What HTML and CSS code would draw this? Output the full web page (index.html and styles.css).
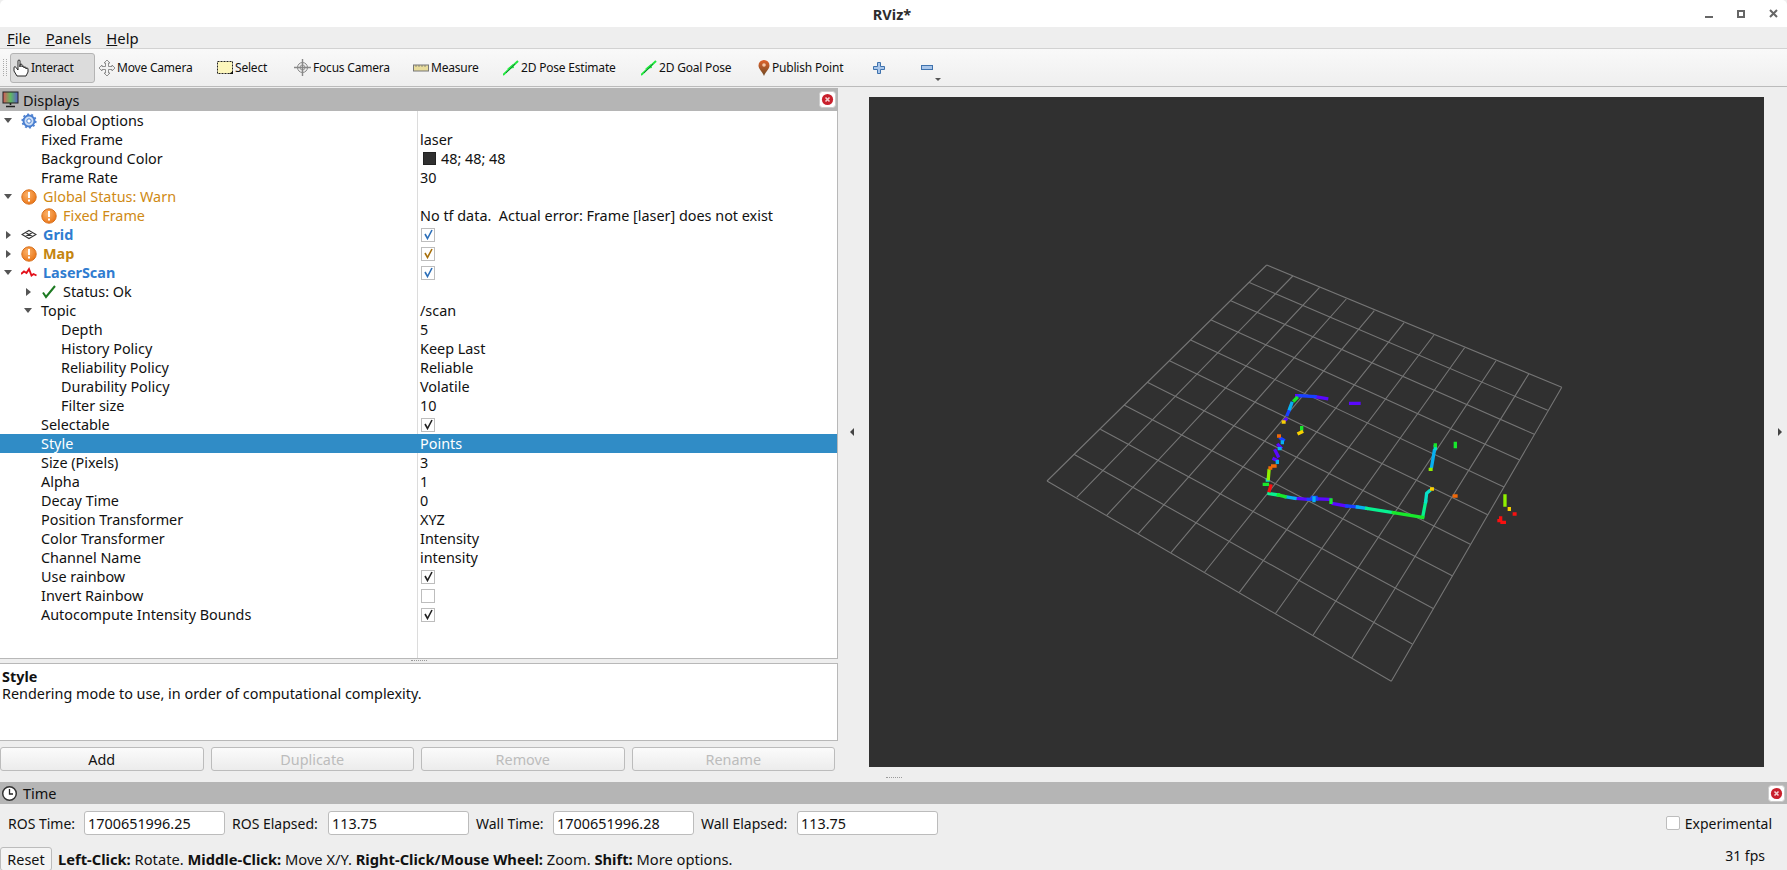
FILE: index.html
```html
<!DOCTYPE html>
<html lang="en">
<head>
    <meta charset="UTF-8">
    <meta name="viewport" content="width=device-width, initial-scale=1.0">
    <title>RViz*</title>
    <link rel="stylesheet" href="styles.css">
</head>
<body>

    <!-- Shared icons -->
    <svg class="defs" width="0" height="0">
        <defs>
            <radialGradient id="warnFill" cx="40%" cy="35%" r="70%">
                <stop offset="0" stop-color="#fbb26a"/>
                <stop offset="1" stop-color="#ea7414"/>
            </radialGradient>
            <linearGradient id="pinFill" x1="0" y1="0" x2="0" y2="1">
                <stop offset="0" stop-color="#e0622a"/>
                <stop offset="1" stop-color="#6e4a26"/>
            </linearGradient>
            <linearGradient id="screenFill" x1="0" y1="0" x2="1" y2="0">
                <stop offset="0" stop-color="#d85a5a"/>
                <stop offset=".5" stop-color="#62b862"/>
                <stop offset="1" stop-color="#5a62c8"/>
            </linearGradient>
            <symbol id="warn" viewBox="0 0 16 16">
                <circle cx="8" cy="8" r="7.2" fill="url(#warnFill)" stroke="#d8701c"/>
                <rect x="7" y="3" width="2" height="6" fill="#fff"/>
                <rect x="7" y="10.5" width="2" height="2" fill="#fff"/>
            </symbol>
            <symbol id="closeBtn" viewBox="0 0 17 17">
                <rect x=".5" y=".5" width="16" height="16" rx="3" fill="#fff" stroke="#ccc"/>
                <circle cx="8.5" cy="8.5" r="5.6" fill="#c9202c"/>
                <path d="M6.5 6.5l4 4M10.5 6.5l-4 4" stroke="#f4d0d0" stroke-width="1.6"/>
            </symbol>
            <symbol id="goalArrow" viewBox="0 0 16 16">
                <path d="M0 15L15 1" stroke="#1fe83c" stroke-width="2"/>
                <path d="M4 9L11 8L10 4z" fill="#1fe83c"/>
                <path d="M3 13L12 4" stroke="#17803a" stroke-width="1"/>
            </symbol>
        </defs>
    </svg>

    <!-- Window title -->
    <header class="titlebar">
        <span></span>
        <span class="title">RViz*</span>
        <div class="winbtns">
            <span class="win-min"></span>
            <span class="win-max"></span>
            <svg class="win-close" width="9" height="9" viewBox="0 0 9 9"><path d="M1 1l7 7M8 1l-7 7" stroke="#666" stroke-width="2"/></svg>
        </div>
    </header>

    <nav class="menubar">
        <span class="menu"><u>F</u>ile</span>
        <span class="menu"><u>P</u>anels</span>
        <span class="menu"><u>H</u>elp</span>
    </nav>

    <div class="toolbar">
        <span class="grip"></span>
        <div class="tool tool-active">
            <svg width="16" height="18" viewBox="0 0 16 18"><path d="M5 9V2a1 1 0 0 1 2 0v6V6a1 1 0 0 1 2 0v2a1 1 0 0 1 2 0v1a1 1 0 0 1 2 0v1a1 1 0 0 1 2 0v3l-2 4H4l-3-5V9a1 1 0 0 1 2-.5l2 2.5z" fill="#fff" stroke="#111" stroke-width=".9"/></svg>
            <span>Interact</span>
        </div>
        <div class="tool">
            <svg width="16" height="16" viewBox="0 0 16 16"><path d="M8 0l3 3H9.500v3.500H13V5l3 3-3 3V9.500H9.500V13H11l-3 3-3-3h1.500V9.500H3V11L0 8l3-3v1.500h3.500V3H5z" fill="#f2f2f2" stroke="#777" stroke-width=".8"/></svg>
            <span>Move Camera</span>
        </div>
        <div class="tool">
            <svg width="16" height="14" viewBox="0 0 16 14"><rect x=".5" y=".5" width="15" height="12" fill="#fdf6bc" stroke="#222" stroke-dasharray="2 1"/><path d="M12 13h4v-3z" fill="#111"/></svg>
            <span>Select</span>
        </div>
        <div class="tool">
            <svg width="17" height="17" viewBox="0 0 17 17"><circle cx="8.500" cy="8.500" r="5" fill="#eee" stroke="#888"/><circle cx="8.500" cy="8.500" r="2.500" fill="none" stroke="#999"/><path d="M8.500 0v17M0 8.500h17" stroke="#888" stroke-width="1.400"/></svg>
            <span>Focus Camera</span>
        </div>
        <div class="tool">
            <svg width="16" height="8" viewBox="0 0 16 8"><rect x=".5" y="1" width="15" height="6" fill="#e8dc9c" stroke="#777"/><path d="M3 1v2M6 1v2M9 1v2M12 1v2" stroke="#777" stroke-width=".8"/></svg>
            <span>Measure</span>
        </div>
        <div class="tool">
            <svg width="16" height="16"><use href="#goalArrow"/></svg>
            <span>2D Pose Estimate</span>
        </div>
        <div class="tool">
            <svg width="16" height="16"><use href="#goalArrow"/></svg>
            <span>2D Goal Pose</span>
        </div>
        <div class="tool">
            <svg width="12" height="16" viewBox="0 0 12 16"><path d="M6 0a5.500 5.500 0 0 0-5.500 5.500C.5 9 4 11 6 16c2-5 5.500-7 5.500-10.500A5.500 5.500 0 0 0 6 0z" fill="url(#pinFill)"/><circle cx="6" cy="5" r="1.800" fill="#f6c8a8"/></svg>
            <span>Publish Point</span>
        </div>
        <div class="tool">
            <svg width="12" height="12" viewBox="0 0 12 12"><path d="M4.500.5h3v4h4v3h-4v4h-3v-4h-4v-3h4z" fill="#a9c6ea" stroke="#3f72ad"/></svg>
        </div>
        <div class="tool">
            <svg width="12" height="5" viewBox="0 0 12 5"><rect x=".5" y=".5" width="11" height="4" fill="#a9c6ea" stroke="#3f72ad"/></svg>
            <span class="more-arrow"></span>
        </div>
    </div>

    <main class="main">

        <!-- Displays panel -->
        <section class="displays">
            <div class="dock-title">
                <svg width="17" height="17" viewBox="0 0 17 17"><rect x="1" y="1" width="15" height="11" fill="url(#screenFill)" stroke="#222"/><path d="M8.500 12v2M4 15.500h9" stroke="#222" stroke-width="1.600"/></svg>
                <span class="dock-name">Displays</span>
                <svg class="dock-close" width="17" height="17"><use href="#closeBtn"/></svg>
            </div>

            <div class="tree">
                <div class="row">
                    <div class="name"><span class="twist open"></span>
                        <svg class="ico" width="16" height="16" viewBox="0 0 16 16"><circle cx="8" cy="8" r="5.500" fill="#cfe0f6" stroke="#4a7fd0" stroke-width="2"/><circle cx="8" cy="8" r="6.800" fill="none" stroke="#4a7fd0" stroke-width="1.600" stroke-dasharray="2 2.270"/><circle cx="8" cy="8" r="2.200" fill="#fff" stroke="#4a7fd0"/></svg>
                        <span class="label">Global Options</span></div>
                    <div class="value"></div>
                </div>
                <div class="row">
                    <div class="name lvl1"><span class="twist"></span>Fixed Frame</div>
                    <div class="value">laser</div>
                </div>
                <div class="row">
                    <div class="name lvl1"><span class="twist"></span>Background Color</div>
                    <div class="value"><span class="swatch"></span>48; 48; 48</div>
                </div>
                <div class="row">
                    <div class="name lvl1"><span class="twist"></span>Frame Rate</div>
                    <div class="value">30</div>
                </div>
                <div class="row warn-text">
                    <div class="name"><span class="twist open"></span><svg class="ico" width="16" height="16"><use href="#warn"/></svg><span class="label">Global Status: Warn</span></div>
                    <div class="value"></div>
                </div>
                <div class="row warn-text">
                    <div class="name lvl1"><span class="twist"></span><svg class="ico" width="16" height="16"><use href="#warn"/></svg><span class="label">Fixed Frame</span></div>
                    <div class="value value-plain">No tf data.&nbsp; Actual error: Frame [laser] does not exist</div>
                </div>
                <div class="row display-ok">
                    <div class="name"><span class="twist shut"></span>
                        <svg class="ico" width="16" height="16" viewBox="0 0 16 16"><path d="M8 3.500L15 7.500L8 11.500L1 7.500zM4.500 5.500L11.500 9.500M11.500 5.500L4.500 9.500" fill="none" stroke="#333" stroke-width="1.100"/></svg>
                        <span class="label">Grid</span></div>
                    <div class="value"><span class="check"><svg width="11" height="11" viewBox="0 0 11 11"><path d="M2 5l2.500 4.500L9 1" fill="none" stroke="#2d6fb8" stroke-width="1.600"/></svg></span></div>
                </div>
                <div class="row display-warn">
                    <div class="name"><span class="twist shut"></span><svg class="ico" width="16" height="16"><use href="#warn"/></svg><span class="label">Map</span></div>
                    <div class="value"><span class="check"><svg width="11" height="11" viewBox="0 0 11 11"><path d="M2 5l2.500 4.500L9 1" fill="none" stroke="#a8700c" stroke-width="1.600"/></svg></span></div>
                </div>
                <div class="row display-ok">
                    <div class="name"><span class="twist open"></span>
                        <svg class="ico" width="16" height="16" viewBox="0 0 16 16"><path d="M0 9l3-2.500 2.500 1.500 2.500-4 2.500 6.500 2-1.500 3 1.500" fill="none" stroke="#e3101a" stroke-width="1.900"/></svg>
                        <span class="label">LaserScan</span></div>
                    <div class="value"><span class="check"><svg width="11" height="11" viewBox="0 0 11 11"><path d="M2 5l2.500 4.500L9 1" fill="none" stroke="#2d6fb8" stroke-width="1.600"/></svg></span></div>
                </div>
                <div class="row">
                    <div class="name lvl1"><span class="twist shut"></span>
                        <svg class="ico" width="16" height="16" viewBox="0 0 16 16"><path d="M2 8.500l3 4.500L14 2" fill="none" stroke="#1d7a22" stroke-width="2"/></svg>
                        <span class="label">Status: Ok</span></div>
                    <div class="value"></div>
                </div>
                <div class="row">
                    <div class="name lvl1"><span class="twist open"></span>Topic</div>
                    <div class="value">/scan</div>
                </div>
                <div class="row">
                    <div class="name lvl2"><span class="twist"></span>Depth</div>
                    <div class="value">5</div>
                </div>
                <div class="row">
                    <div class="name lvl2"><span class="twist"></span>History Policy</div>
                    <div class="value">Keep Last</div>
                </div>
                <div class="row">
                    <div class="name lvl2"><span class="twist"></span>Reliability Policy</div>
                    <div class="value">Reliable</div>
                </div>
                <div class="row">
                    <div class="name lvl2"><span class="twist"></span>Durability Policy</div>
                    <div class="value">Volatile</div>
                </div>
                <div class="row">
                    <div class="name lvl2"><span class="twist"></span>Filter size</div>
                    <div class="value">10</div>
                </div>
                <div class="row">
                    <div class="name lvl1"><span class="twist"></span>Selectable</div>
                    <div class="value"><span class="check"><svg width="11" height="11" viewBox="0 0 11 11"><path d="M2 5l2.500 4.500L9 1" fill="none" stroke="#222" stroke-width="1.600"/></svg></span></div>
                </div>
                <div class="row selected">
                    <div class="name lvl1"><span class="twist"></span>Style</div>
                    <div class="value">Points</div>
                </div>
                <div class="row">
                    <div class="name lvl1"><span class="twist"></span>Size (Pixels)</div>
                    <div class="value">3</div>
                </div>
                <div class="row">
                    <div class="name lvl1"><span class="twist"></span>Alpha</div>
                    <div class="value">1</div>
                </div>
                <div class="row">
                    <div class="name lvl1"><span class="twist"></span>Decay Time</div>
                    <div class="value">0</div>
                </div>
                <div class="row">
                    <div class="name lvl1"><span class="twist"></span>Position Transformer</div>
                    <div class="value">XYZ</div>
                </div>
                <div class="row">
                    <div class="name lvl1"><span class="twist"></span>Color Transformer</div>
                    <div class="value">Intensity</div>
                </div>
                <div class="row">
                    <div class="name lvl1"><span class="twist"></span>Channel Name</div>
                    <div class="value">intensity</div>
                </div>
                <div class="row">
                    <div class="name lvl1"><span class="twist"></span>Use rainbow</div>
                    <div class="value"><span class="check"><svg width="11" height="11" viewBox="0 0 11 11"><path d="M2 5l2.500 4.500L9 1" fill="none" stroke="#222" stroke-width="1.600"/></svg></span></div>
                </div>
                <div class="row">
                    <div class="name lvl1"><span class="twist"></span>Invert Rainbow</div>
                    <div class="value"><span class="check"></span></div>
                </div>
                <div class="row">
                    <div class="name lvl1"><span class="twist"></span>Autocompute Intensity Bounds</div>
                    <div class="value"><span class="check"><svg width="11" height="11" viewBox="0 0 11 11"><path d="M2 5l2.500 4.500L9 1" fill="none" stroke="#222" stroke-width="1.600"/></svg></span></div>
                </div>
                <div class="tree-fill"></div>
            </div>

            <div class="split-h"><span class="dots dots-tree"></span></div>

            <div class="help">
                <b>Style</b><br>
                Rendering mode to use, in order of computational complexity.
            </div>

            <div class="actions">
                <button class="btn">Add</button>
                <button class="btn" disabled>Duplicate</button>
                <button class="btn" disabled>Remove</button>
                <button class="btn" disabled>Rename</button>
            </div>
        </section>

        <!-- 3D view -->
        <section class="viewport">
            <div class="side side-left"><span class="tri-left"></span></div>
            <svg class="render" width="895" height="670" viewBox="869 97 895 670">
                <g class="gridlines">
                    <path d="M1266.7 265L1561.8 387.300M1248.800 282.300L1547.700 410.300M1230.800 300.700L1534.300 434.300M1211.200 320L1519.300 459.700M1190.600 340L1504 487M1169.500 360.700L1487.700 514.700M1147.300 382.300L1470.300 544.300M1124 405L1452.700 576M1100.300 429.300L1433.700 608.700M1073.900 454.300L1412.300 644M1047 481L1391.300 681.300"/>
                    <path d="M1266.700 265L1047 481M1292.800 276L1076.700 497.300M1319.600 287.300L1106.700 515.300M1346.300 299L1138.300 533.700M1374.300 310.700L1171 552.700M1404.100 322.700L1204.700 572M1434 335L1239.300 592.300M1464.600 347.700L1275.300 613.700M1496 360.700L1313 635.300M1528.900 373.700L1351.700 658M1561.800 387.300L1391.300 681.300"/>
                </g>
                <!-- scan points, traced at 3x around (1250, 380) -->
                <g class="scan" transform="translate(1250 380) scale(.3333)">
                    <path class="c-violet" d="M140 47H150M195 50L230 56M302 70H327M108 118L104 122M72 237L80 241M76 212L84 228M85 195L92 203M135 355L175 358M205 357L240 358M250 371L290 378"/>
                    <path class="c-blue" d="M150 47L195 50M118 90L112 104M92 175L100 180M175 358L200 357M187 352H198M290 378L322 381"/>
                    <path class="c-sky" d="M125 70L119 86M97 186V188M82 245V247M88 206H90M105 350L135 355M192 354V362M322 381L350 385M553 212L545 260"/>
                    <path class="c-spring" d="M57 341L85 345M350 385L430 398M518 412L527 365"/>
                    <path class="c-cyan" d="M52 300H54M527 365L530 340L538 333M556 200V205"/>
                    <path class="c-green" d="M133 61L140 54M43 313H52M85 345L105 350M243 360V367M430 398L518 412M155 143V147M556 195V197M616 190V200"/>
                    <path class="c-lime" d="M57 272L55 296M541 268H543M765 348V375"/>
                    <path class="c-yellow" d="M147 160L155 156M100 126H102M545 327H547M778 386V388"/>
                    <path class="c-orange" d="M86 168H88M60 264H62M68 258H75M613 348H618"/>
                    <path class="c-red" d="M62 318L58 332M793 402H795M752 414V418M747 422H752M756 427H763"/>
                </g>
            </svg>
            <div class="side side-right"><span class="tri-right"></span></div>
        </section>
    </main>

    <div class="split-v"><span class="dots"></span></div>

    <!-- Time panel -->
    <section class="time-panel">
        <div class="dock-title dock-title-time">
            <svg width="17" height="17" viewBox="0 0 17 17"><circle cx="8.500" cy="8.500" r="6.800" fill="#fff" stroke="#333" stroke-width="1.500"/><path d="M8.500 4v5H12" fill="none" stroke="#222" stroke-width="1.300"/></svg>
            <span class="dock-name">Time</span>
            <svg class="dock-close" width="17" height="17"><use href="#closeBtn"/></svg>
        </div>
        <div class="time-row">
            <label class="time-label">ROS Time:</label>
            <input class="time-input" type="text" value="1700651996.25">
            <label class="time-label wide">ROS Elapsed:</label>
            <input class="time-input" type="text" value="113.75">
            <label class="time-label wall">Wall Time:</label>
            <input class="time-input" type="text" value="1700651996.28">
            <label class="time-label wide">Wall Elapsed:</label>
            <input class="time-input" type="text" value="113.75">
            <div class="experimental"><span class="check check-exp"></span>Experimental</div>
        </div>
    </section>

    <footer class="statusbar">
        <button class="btn btn-reset">Reset</button>
        <span class="hint"><b>Left-Click:</b> Rotate. <b>Middle-Click:</b> Move X/Y. <b>Right-Click/Mouse Wheel:</b> Zoom. <b>Shift:</b> More options.</span>
        <span class="fps">31 fps</span>
    </footer>

</body>
</html>
```

FILE: styles.css
```css
* {
    box-sizing: border-box;
}

html {
    background: #2a2a2a;
}

body {
    font-family: "Noto Sans", Arial, sans-serif;
    font-size: 14px;
    color: #111;
    margin: 0;
    width: 1787px;
    height: 870px;
    overflow: hidden;
    display: flex;
    flex-direction: column;
    background: #eeeeee;
}

.defs {
    position: absolute;
}

/* Window title */
.titlebar {
    height: 27px;
    flex: none;
    display: grid;
    grid-template-columns: 1fr auto 1fr;
    align-items: center;
    background: #fff;
    border-radius: 5px 5px 0 0;
}

.title {
    font-weight: 700;
    font-size: 14.5px;
    color: #2d2d2d;
    margin-left: -3px;
}

.winbtns {
    display: flex;
    justify-content: flex-end;
    align-items: center;
    gap: 24px;
    padding-right: 9px;
}

.win-min {
    width: 8px;
    height: 2px;
    margin-top: 7px;
    background: #666;
}

.win-max {
    width: 8px;
    height: 8px;
    border: 2px solid #666;
}

.menubar {
    height: 22px;
    flex: none;
    display: flex;
    align-items: center;
    gap: 15px;
    padding-left: 7px;
    font-size: 14.8px;
    background: #eeeeee;
    border-bottom: 1px solid #d2d2d2;
}

/* Toolbar */
.toolbar {
    height: 38px;
    flex: none;
    display: grid;
    grid-template-columns: 10px 86px 118px 77px 119px 90px 138px 117px 115px 48px 40px;
    align-items: center;
    font-size: 12px;
    letter-spacing: -.2px;
    background: linear-gradient(#f9f9f9, #efefef);
    border-bottom: 1px solid #bbbbbb;
}

.grip {
    width: 4px;
    height: 17px;
    margin-left: 3px;
    border-left: 1px dotted #aaa;
    border-right: 1px dotted #aaa;
}

.tool {
    height: 30px;
    padding-left: 3px;
    display: flex;
    align-items: center;
    gap: 2px;
    position: relative;
    white-space: nowrap;
}

.tool-active {
    width: 85px;
    background: #dcdcdc;
    border: 1px solid #b4b4b4;
    border-radius: 3px;
    padding-left: 2px;
}

.more-arrow {
    position: absolute;
    left: 17px;
    top: 25px;
    border: 3px solid transparent;
    border-top: 3px solid #555;
}

/* Main area */
.main {
    flex: 1;
    min-height: 0;
    display: flex;
}

.displays {
    width: 838px;
    flex: none;
    display: flex;
    flex-direction: column;
    padding: 1px 0 4px;
}

.dock-title {
    height: 23px;
    flex: none;
    display: flex;
    align-items: center;
    padding-left: 2px;
    background: #b5b5b5;
    font-size: 14.5px;
}

.dock-name {
    margin-left: 4px;
}

.dock-close {
    margin-left: auto;
    margin-right: 2px;
}

.tree {
    flex: 1;
    min-height: 0;
    display: flex;
    flex-direction: column;
    font-size: 14.4px;
    background: #fff;
    border-right: 1px solid #b8b8b8;
    border-bottom: 1px solid #b8b8b8;
}

.row {
    height: 19px;
    flex: none;
    display: flex;
    line-height: 19px;
}

.name {
    width: 418px;
    flex: none;
    display: flex;
    align-items: center;
    border-right: 1px solid #dcdcdc;
    white-space: nowrap;
}

.lvl1 {
    padding-left: 20px;
}

.lvl2 {
    padding-left: 40px;
}

.twist {
    width: 21px;
    flex: none;
    display: flex;
    align-items: center;
    padding-left: 4px;
}

.twist.open::before {
    content: "";
    border: 4px solid transparent;
    border-top: 5px solid #555;
    border-bottom: 0;
}

.twist.shut::before {
    content: "";
    margin-left: 2px;
    border: 4px solid transparent;
    border-left: 5px solid #555;
    border-right: 0;
}

.ico {
    flex: none;
}

.label {
    margin-left: 6px;
}

.value {
    padding-left: 2px;
    display: flex;
    align-items: center;
    white-space: pre;
}

.swatch {
    width: 13px;
    height: 13px;
    margin: 0 5px 0 3px;
    background: #303030;
    border: 1px solid #222;
}

.check {
    width: 14px;
    height: 14px;
    margin-left: 1px;
    display: flex;
    align-items: center;
    justify-content: center;
    background: #fff;
    border: 1px solid #bdbdbd;
}

.warn-text .label {
    color: #cf8a14;
}

.display-ok .label {
    color: #2f7cd0;
    font-weight: 700;
}

.display-warn .label {
    color: #c48510;
    font-weight: 700;
}

.value-plain {
    color: #111;
}

.selected {
    background: #308cc6;
    color: #fff;
}

.selected .name {
    border-right-color: transparent;
}

.tree-fill {
    flex: 1;
    width: 418px;
    border-right: 1px solid #dcdcdc;
}

.split-h {
    height: 4px;
    flex: none;
    display: flex;
    justify-content: flex-start;
    padding-left: 411px;
}

.dots {
    width: 16px;
    height: 1px;
    border-top: 1px dotted #9a9a9a;
}

.dots-tree {
    margin-top: 1px;
}

.help {
    height: 78px;
    flex: none;
    padding: 4px 2px;
    font-size: 14.4px;
    line-height: 17px;
    background: #fff;
    border: 1px solid #b8b8b8;
    border-left: 0;
}

.actions {
    display: flex;
    gap: 7px;
    margin-top: 6px;
    padding-right: 3px;
}

.btn {
    flex: 1;
    height: 24px;
    padding: 0;
    font-family: inherit;
    font-size: 14.4px;
    color: #111;
    background: linear-gradient(#fbfbfb, #ececec);
    border: 1px solid #bcbcbc;
    border-radius: 3px;
}

.btn:disabled {
    color: #bcbcbc;
}

/* 3D view */
.viewport {
    flex: 1;
    display: flex;
    padding-top: 10px;
    align-items: flex-start;
}

.render {
    flex: none;
    display: block;
    background: #303030;
}

.side {
    height: 670px;
    display: flex;
    align-items: center;
}

.side-left {
    width: 31px;
    padding-left: 12px;
}

.side-right {
    flex: 1;
    padding-left: 14px;
}

.tri-left {
    border: 4px solid transparent;
    border-right: 4px solid #444;
    border-left: 0;
}

.tri-right {
    border: 4px solid transparent;
    border-left: 4px solid #444;
    border-right: 0;
}

.gridlines path {
    fill: none;
    stroke: #757575;
    stroke-width: 1.1;
}

.scan path {
    fill: none;
    stroke-width: 10;
    stroke-linecap: square;
    stroke-linejoin: round;
}

.c-violet { stroke: #5a08ff; }
.c-blue { stroke: #1840ff; }
.c-sky { stroke: #08b0f0; }
.c-cyan { stroke: #08e0c8; }
.c-spring { stroke: #08f090; }
.c-green { stroke: #18e82c; }
.c-lime { stroke: #90f000; }
.c-yellow { stroke: #f8d000; }
.c-orange { stroke: #f06808; }
.c-red { stroke: #f81010; }

.split-v {
    height: 7px;
    flex: none;
    display: flex;
    justify-content: center;
    padding-top: 2px;
}

/* Time panel */
.time-panel {
    flex: none;
}

.dock-title-time {
    height: 22px;
    padding-left: 1px;
}

.dock-title-time .dock-name {
    margin-left: 5px;
}

.time-row {
    height: 43px;
    display: flex;
    align-items: center;
    gap: 7px;
    padding: 0 15px 5px 8px;
}

.time-label {
    width: 69px;
}

.time-label.wall {
    width: 70px;
}

.time-label.wide {
    width: 89px;
}

.time-input {
    width: 141px;
    height: 24px;
    padding: 0 3px;
    font-family: inherit;
    font-size: 14.4px;
    color: #111;
    background: #fff;
    border: 1px solid #bcbcbc;
    border-radius: 3px;
}

.experimental {
    margin-left: auto;
    display: flex;
    align-items: center;
    gap: 5px;
}

.check-exp {
    border-radius: 2px;
}

.statusbar {
    height: 23px;
    flex: none;
    display: flex;
    align-items: center;
}

.btn-reset {
    flex: none;
    width: 52px;
    height: 24px;
    margin-top: 1px;
    background: #f4f4f4;
}

.hint {
    margin-left: 6px;
    font-size: 14.7px;
}

.fps {
    margin-left: auto;
    margin-right: 22px;
    margin-bottom: 6px;
}
```
